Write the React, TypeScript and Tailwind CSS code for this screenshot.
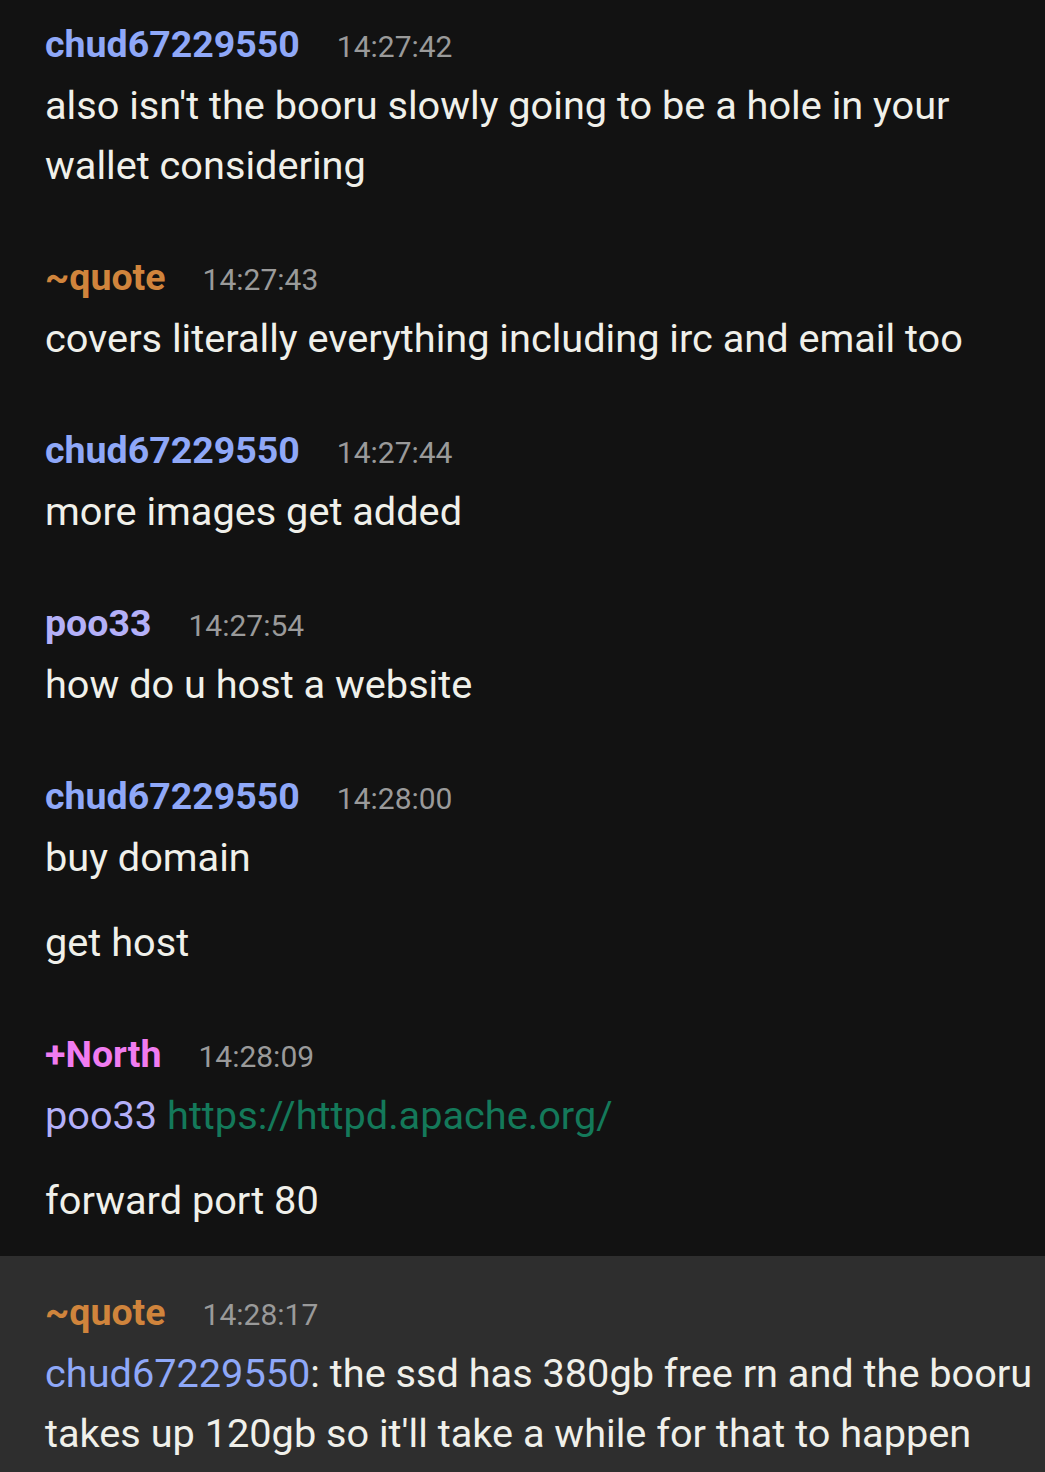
import React from "react";

type Msg = {
  nick: string;
  nickColor: string;
  time: string;
  paras: React.ReactNode[];
  highlight?: boolean;
};

const msgs: Msg[] = [
  {
    nick: "chud67229550",
    nickColor: "text-[#8fa8f8]",
    time: "14:27:42",
    paras: ["also isn't the booru slowly going to be a hole in your wallet considering"],
  },
  {
    nick: "~quote",
    nickColor: "text-[#d0843c]",
    time: "14:27:43",
    paras: ["covers literally everything including irc and email too"],
  },
  {
    nick: "chud67229550",
    nickColor: "text-[#8fa8f8]",
    time: "14:27:44",
    paras: ["more images get added"],
  },
  {
    nick: "poo33",
    nickColor: "text-[#b4b0f8]",
    time: "14:27:54",
    paras: ["how do u host a website"],
  },
  {
    nick: "chud67229550",
    nickColor: "text-[#8fa8f8]",
    time: "14:28:00",
    paras: ["buy domain", "get host"],
  },
  {
    nick: "+North",
    nickColor: "text-[#f07cf0]",
    time: "14:28:09",
    paras: [
      <>
        <span className="text-[#b4b0f8]">poo33</span>{" "}
        <span className="text-[#14795a]">https://httpd.apache.org/</span>
      </>,
      "forward port 80",
    ],
  },
  {
    nick: "~quote",
    nickColor: "text-[#d0843c]",
    time: "14:28:17",
    highlight: true,
    paras: [
      <>
        <span className="text-[#8fa8f8]">chud67229550</span>: the ssd has 380gb free rn and the booru takes up 120gb so it'll take a while for that to happen
      </>,
    ],
  },
];

export default function App() {
  return (
    <div
      className="w-[1045px] h-[1472px] overflow-hidden bg-[#121212] text-[#f0f0ea]"
      style={{ fontFamily: "Roboto, 'Noto Sans', sans-serif" }}
    >
      <div className="-mt-[12px] flex flex-col">
        {msgs.map((m, i) => (
          <div
            key={i}
            className={`pl-[45px] pr-[8px] pt-[26px] pb-[25px] ${m.highlight ? "bg-[#2e2e2e]" : ""}`}
          >
            <div className="flex items-baseline h-[62px] leading-[60px]">
              <span className={`text-[37.5px] font-bold ${m.nickColor}`}>{m.nick}</span>
              <span className="ml-[37px] text-[30px] text-[#9a9a9a]">{m.time}</span>
            </div>
            <div className="flex flex-col gap-[25px]">
              {m.paras.map((p, j) => (
                <div key={j} className="text-[39.7px] leading-[60px]">
                  {p}
                </div>
              ))}
            </div>
          </div>
        ))}
      </div>
    </div>
  );
}
